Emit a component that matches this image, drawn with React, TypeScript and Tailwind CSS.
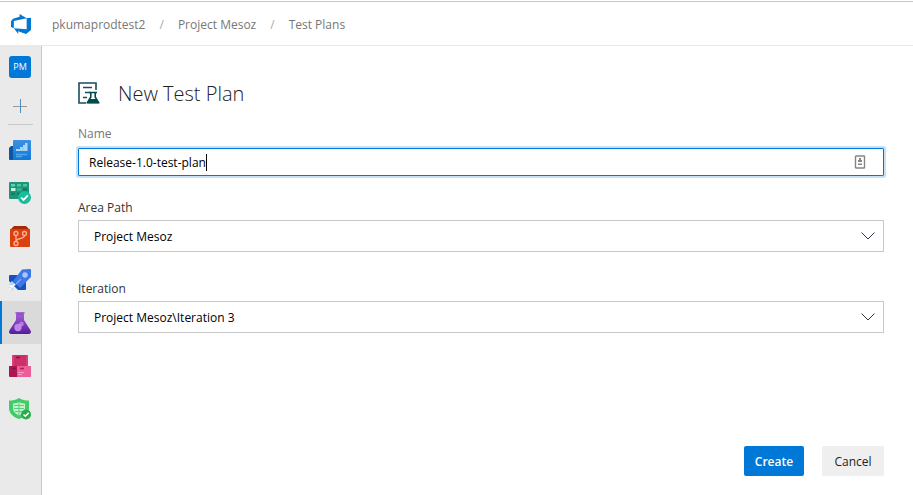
import type { ReactNode } from "react";

function DevOpsLogo() {
  return (
    <svg viewBox="1 1 16 16" className="h-5 w-5" fill="#0078d4" aria-hidden="true">
      <path d="M17 4v9.74l-4 3.28-6.2-2.26V17l-3.51-4.59 10.23.8V4.44Zm-3.41.49L7.85 1v2.29L2.58 4.84 1 6.87v4.61l2.26 1V6.57Z" />
    </svg>
  );
}

function Glyph({ children, viewBox = "0 0 22 22" }: { children: ReactNode; viewBox?: string }) {
  return (
    <svg viewBox={viewBox} className="h-[22px] w-[22px] overflow-visible" fill="none" aria-hidden="true">
      {children}
    </svg>
  );
}

const overview = (
  <Glyph viewBox="0 1 22 22">
    <defs>
      <linearGradient id="ov" x1="0" y1="0" x2="0" y2="1">
        <stop stopColor="#3f8fe2" />
        <stop offset="1" stopColor="#0f7ad8" />
      </linearGradient>
    </defs>
    <path d="M2 7h4v14H1a1 1 0 0 1-1-1V9Z" fill="#0b57a4" />
    <path d="M5 1h16a1 1 0 0 1 1 1v18a1 1 0 0 1-1 1H3c1 0 1-1 1-2V2a1 1 0 0 1 1-1Z" fill="url(#ov)" />
    <path d="M7 10h4V8h3V6h2V4h2.500v8H7Z" fill="#a9d5f7" />
    <path d="M14 8v4M11 10v2" stroke="#8fc6f2" />
    <path d="M7 15.500h11M7 17.500h6" stroke="#54a4ea" strokeWidth="1.500" />
  </Glyph>
);

const boards = (
  <Glyph viewBox="0 1 22 22">
    <rect y="0" width="20" height="17" rx="1" fill="#1e9479" />
    <path d="M2 2h4v2.500H2Z" fill="#63cfae" />
    <path d="M8 2h4v2.500H8ZM14 2h4v2.500h-4Z" fill="#4fc49d" />
    <path d="M2 6h4.500v3H2Z" fill="#bdf5dd" />
    <path d="M8 6h4.500v3H8Z" fill="#36b090" />
    <path d="M14 6h4v3h-4ZM2 10.500h4V13H2ZM8 10.500h4V13H8Z" fill="#127e67" />
    <circle cx="15.500" cy="15.500" r="6.500" fill="#18bd9c" />
    <path d="m12.200 15.500 2.300 2.400 4.400-4.600" stroke="#fff" strokeWidth="1.800" />
  </Glyph>
);

const repos = (
  <Glyph>
    <path d="m4 1 1-1h12l1 1 3 3H1Z" fill="#a52a08" />
    <path d="M2 3h18a1 1 0 0 1 1 1v16a1 1 0 0 1-1 1H2a1 1 0 0 1-1-1V4a1 1 0 0 1 1-1Z" fill="#db4011" />
    <g stroke="#ffb094" strokeWidth="1.300">
      <circle cx="7" cy="7.500" r="2" />
      <circle cx="15.500" cy="7.500" r="2" />
      <circle cx="7" cy="17.500" r="2" />
      <path d="M7 9.500v6c0-4 8.500-2 8.500-6" />
    </g>
  </Glyph>
);

const pipelines = (
  <Glyph>
    <path d="M1 6h7l9 7v7a1 1 0 0 1-1 1H9l-9-9V7a1 1 0 0 1 1-1Z" fill="#1552bd" />
    <path d="m13 .5 8-.5a1 1 0 0 1 1 1v7L11 19l-7-7Z" fill="#3c78e6" />
    <circle cx="16" cy="6" r="2.700" fill="#a9c7fb" />
    <path d="m7 15 5-5" stroke="#82a9f4" strokeWidth="1.300" />
    <path d="m3 12 4 4-3 1v4H0v-6Z" fill="#b9d3fc" />
    <path d="m0 21 6-6M0 17h3" stroke="#fff" strokeWidth="1.300" />
  </Glyph>
);

const testPlans = (
  <Glyph>
    <defs>
      <linearGradient id="tp" x1="0" y1="0" x2="0" y2="1">
        <stop stopColor="#a566d5" />
        <stop offset="0.500" stopColor="#8441bd" />
        <stop offset="1" stopColor="#541b9b" />
      </linearGradient>
    </defs>
    <path d="M6.500 0h9v2H15v6l6.600 10.500c1 1.700-.1 3.500-2 3.500H2.400c-1.900 0-3-1.800-2-3.500L7 8V2h-.5Z" fill="url(#tp)" />
    <path d="M8 2h6" stroke="#8742bf" />
    <circle cx="9" cy="15.500" r="3.700" fill="#bd86ea" />
    <circle cx="12.500" cy="12" r="2.300" fill="#c995f0" fillOpacity="0.700" />
  </Glyph>
);

const artifacts = (
  <Glyph>
    <path d="M4 0h14a1 1 0 0 1 1 1v10H3V1a1 1 0 0 1 1-1Z" fill="#cc3069" />
    <path d="M4 1v10M18 1v10" stroke="#e05289" />
    <path d="M0 11h8v11H1a1 1 0 0 1-1-1Z" fill="#ad1553" />
    <path d="M8 11h14v10a1 1 0 0 1-1 1H8Z" fill="#eb5e99" />
    <path d="M7 2.500h4M3 13.500h4" stroke="#861040" strokeWidth="1.500" />
    <path d="M11 13.500h4" stroke="#b61c5c" strokeWidth="1.500" />
    <path d="M9 17.500h6M9 19.500h4" stroke="#f6a0c5" />
  </Glyph>
);

const compliance = (
  <Glyph>
    <path d="M10 0c3 2 6 2.500 10 2.500V10c0 5-4 9-10 11C4 19 0 15 0 10V2.500C4 2.500 7 2 10 0Z" fill="#43cb68" />
    <path d="M10 4c2 1 4 1.500 6 1.500V10c0 3-2 5.500-6 7.500-4-2-6-4.500-6-7.500V5.500C6 5.500 8 5 10 4Z" fill="#c3f3cd" />
    <path d="M10 4v13M5 7.500h10M5 10.500h10M6 13.500h8" stroke="#55d177" />
    <circle cx="17" cy="16.500" r="5" fill="#2eaa4e" />
    <path d="m14.500 16.500 1.800 1.800 3.400-3.400" stroke="#fff" strokeWidth="1.500" />
  </Glyph>
);

const services = [
  { name: "Overview", icon: overview },
  { name: "Boards", icon: boards },
  { name: "Repos", icon: repos },
  { name: "Pipelines", icon: pipelines },
  { name: "Test Plans", icon: testPlans },
  { name: "Artifacts", icon: artifacts },
  { name: "Compliance", icon: compliance },
];

function Header() {
  return (
    <header className="mt-px flex h-[45px] items-center border-t border-b border-t-[#c8c8c8] border-b-[#eaeaea] pl-[11px]">
      <a href="#home" aria-label="Azure DevOps">
        <DevOpsLogo />
      </a>
      <nav aria-label="Breadcrumb" className="ml-[21px] flex items-center gap-3.5 pt-0.5 text-[#777]">
        <a href="#org">pkumaprodtest2</a>
        <span className="text-[#aaa]">/</span>
        <a href="#project">Project Mesoz</a>
        <span className="text-[#aaa]">/</span>
        <a href="#plans">Test Plans</a>
      </nav>
    </header>
  );
}

function Sidebar() {
  return (
    <nav aria-label="Services" className="flex w-[42px] shrink-0 flex-col border-r border-[#c8c8c8] bg-[#eaeaea]">
      <a href="#project" aria-label="Project Mesoz" className="flex h-[42px] items-center justify-center pr-px">
        <span className="flex h-[22px] w-[22px] items-center justify-center rounded-[3px] bg-[#0078d7] text-[9px] text-white">
          PM
        </span>
      </a>
      <button type="button" aria-label="Add" className="flex h-9 items-center justify-center pr-px">
        <svg viewBox="0 0 14 14" className="h-3.5 w-3.5" aria-hidden="true">
          <path d="M0 7.500h14" stroke="#999" />
          <path d="M7.500 0v14" stroke="#4d8fbd" />
        </svg>
      </button>
      <hr className="mx-2 mb-1 border-[#c8c8c8]" />
      {services.map((service) => (
        <a
          key={service.name}
          href="#service"
          aria-label={service.name}
          className={
            service.name === "Test Plans"
              ? "flex h-[43px] items-center border-l-2 border-[#0078d7] bg-[#dadada] pl-[7px]"
              : "flex h-[43px] items-center pl-[9px]"
          }
        >
          {service.icon}
        </a>
      ))}
    </nav>
  );
}

function PlanIcon() {
  return (
    <svg viewBox="0 0 22 22" className="h-[22px] w-[22px]" fill="none" aria-hidden="true">
      <path d="M18 8V1H1v20h7M5 5.500h9M7 10.500h5M5 15.500h4" stroke="#174f5b" strokeWidth="1.600" />
      <path d="M11 10.500h8M12.800 11v4L9.500 20.500h11L17.200 15v-4" stroke="#004b50" strokeWidth="1.600" />
      <path d="M12 17h6l3 4.500H9Z" fill="#004b50" />
    </svg>
  );
}

type PickerProps = { id: string; label: string; value: string };

function Picker({ id, label, value }: PickerProps) {
  return (
    <div className="flex flex-col gap-0.5">
      <label htmlFor={id} className="leading-5 text-[#333]">
        {label}
      </label>
      <div className="relative">
        <select
          id={id}
          className="block h-8 w-full appearance-none border border-[#c8c8c8] bg-white pt-0.5 pr-10 pl-[15px] text-black outline-none"
        >
          <option>{value}</option>
        </select>
        <svg viewBox="0 0 14 8" className="pointer-events-none absolute top-3 right-[9px] h-2 w-3.5" fill="none" aria-hidden="true">
          <path d="m.5.500 6.500 6.500L13.500.5" stroke="#3b2f4a" />
        </svg>
      </div>
    </div>
  );
}

export default function App() {
  return (
    <div className="flex min-h-screen flex-col bg-white font-['Open_Sans','Noto_Sans',sans-serif] text-[12px]">
      <Header />
      <div className="flex flex-1">
        <Sidebar />
        <main className="flex-1 pt-[31px] pr-[29px] pl-9">
          <div className="flex h-8 items-center gap-[18px]">
            <PlanIcon />
            <h1 className="pt-0.5 text-[20px] font-light text-[#222]">New Test Plan</h1>
          </div>
          <form className="mt-[15px]">
            <label htmlFor="name" className="block leading-5 text-[#777]">
              Name
            </label>
            <div className="mt-1 flex h-7 items-center rounded-[1px] border border-[#0078d7] pr-[17px] pl-2.5 ring-2 ring-[#c7e0f4]">
              <input id="name" type="text" defaultValue="Release-1.0-test-plan" className="[field-sizing:content] pt-0.5 text-black caret-transparent outline-none" />
              <span className="h-[17px] w-px bg-black" />
              <svg viewBox="0 0 12 14" className="ml-auto h-3.5 w-3" fill="none" aria-hidden="true">
                <rect x="1.500" y="1" width="9" height="12" rx="0.500" stroke="#858585" strokeWidth="1.400" />
                <path d="M5 3h2v2h1v2H4V5h1ZM4 8.500h4V10H4Z" fill="#858585" />
              </svg>
            </div>
            <div className="mt-[22px] flex flex-col gap-[27px]">
              <Picker id="area" label="Area Path" value="Project Mesoz" />
              <Picker id="iteration" label="Iteration" value="Project Mesoz\Iteration 3" />
            </div>
            <div className="mt-[113px] flex justify-end gap-[18px]">
              <button type="button" className="h-[30px] w-[60px] rounded-[2px] bg-[#0078d7] pt-0.5 font-semibold text-white">
                Create
              </button>
              <button type="button" className="h-[30px] w-[62px] rounded-[2px] bg-[#efefef] pt-0.5 text-[#222]">
                Cancel
              </button>
            </div>
          </form>
        </main>
      </div>
    </div>
  );
}
